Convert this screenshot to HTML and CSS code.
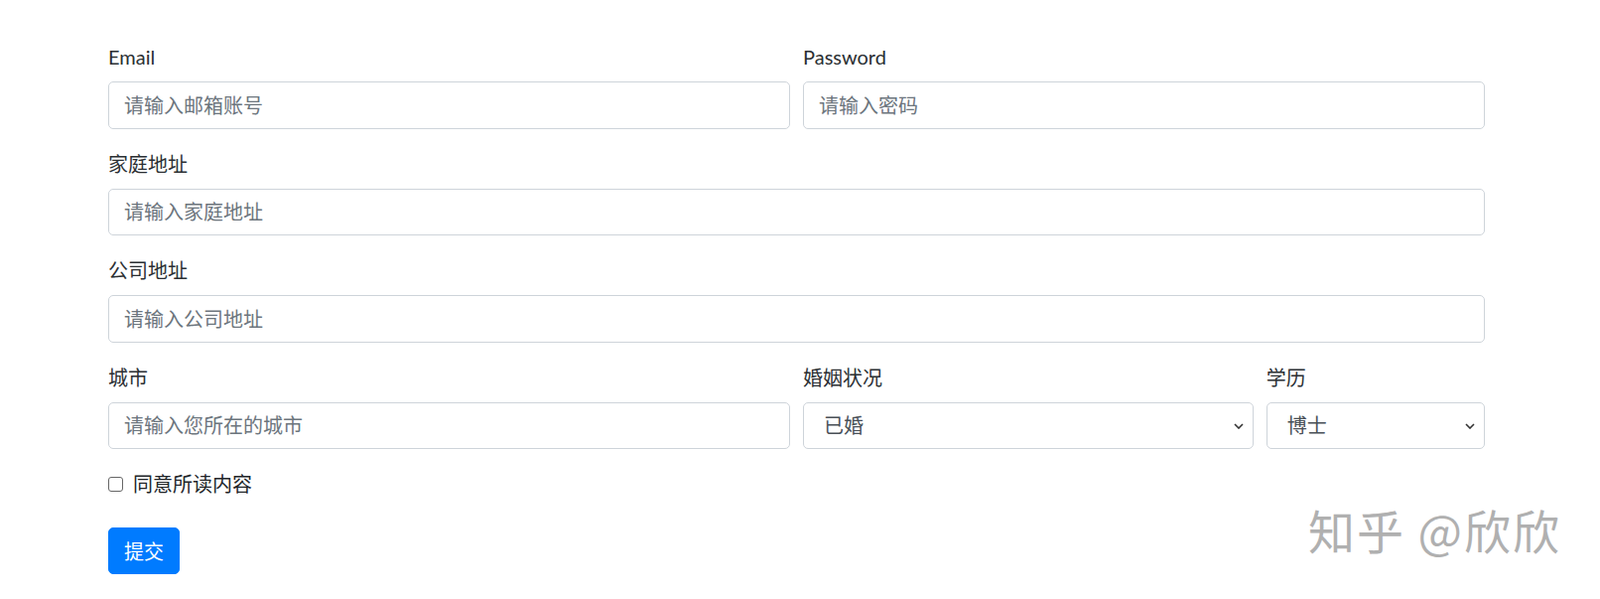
FILE: index.html
```html
<!DOCTYPE html>
<html lang="zh-CN">
<head>
<meta charset="utf-8">
<title>表单</title>
<link rel="stylesheet" href="styles.css">
</head>
<body>
<div class="container">
  <form class="form">
    <div class="row">
      <div class="group col-6">
        <label class="label">Email</label>
        <input class="control" type="email" placeholder="请输入邮箱账号">
      </div>
      <div class="group col-6">
        <label class="label">Password</label>
        <input class="control" type="password" placeholder="请输入密码">
      </div>
    </div>
    <div class="group">
      <label class="label">家庭地址</label>
      <input class="control" type="text" placeholder="请输入家庭地址">
    </div>
    <div class="group">
      <label class="label">公司地址</label>
      <input class="control" type="text" placeholder="请输入公司地址">
    </div>
    <div class="row">
      <div class="group col-6">
        <label class="label">城市</label>
        <input class="control" type="text" placeholder="请输入您所在的城市">
      </div>
      <div class="group col-4">
        <label class="label">婚姻状况</label>
        <div class="select-wrap">
          <select class="control select">
            <option>已婚</option>
            <option>未婚</option>
          </select>
          <svg class="chevron" viewBox="0 0 10 6" width="10" height="6"><path d="M1 1 L5 5 L9 1" fill="none" stroke="#333" stroke-width="1.6"/></svg>
        </div>
      </div>
      <div class="group col-2">
        <label class="label">学历</label>
        <div class="select-wrap">
          <select class="control select">
            <option>博士</option>
            <option>硕士</option>
            <option>本科</option>
          </select>
          <svg class="chevron" viewBox="0 0 10 6" width="10" height="6"><path d="M1 1 L5 5 L9 1" fill="none" stroke="#333" stroke-width="1.6"/></svg>
        </div>
      </div>
    </div>
    <div class="check">
      <input class="check-input" type="checkbox" id="agree">
      <label class="check-label" for="agree">同意所读内容</label>
    </div>
    <button class="btn" type="submit">提交</button>
  </form>
</div>
<div class="watermark">知乎 @欣欣</div>
</body>
</html>
```

FILE: styles.css
```css
* { box-sizing: border-box; }

body {
  margin: 0;
  background: #fff;
  font-family: "Segoe UI", Lato, "Noto Sans CJK SC", sans-serif;
  font-size: 20px;
  line-height: 30px;
  color: #212529;
}

.container {
  width: 1387px;
  margin-left: 109px;
  padding-top: 42px;
}

.row {
  display: flex;
  margin: 0 -6.5px;
}

.col-6, .col-4, .col-2 { padding: 0 6.5px; }
.col-6 { flex: 0 0 50%; }
.col-4 { flex: 0 0 33.3333%; }
.col-2 { flex: 0 0 16.6667%; }

.group { margin-bottom: 20px; }

.label {
  display: block;
  margin-bottom: 10px;
  line-height: 30px;
  color: #2b2f33;
}

.control {
  display: block;
  width: 100%;
  height: 47.5px;
  padding: 7.5px 15px;
  font: inherit;
  font-size: 20px;
  line-height: 30px;
  color: #495057;
  background: #fff;
  border: 1px solid #ced4da;
  border-radius: 5px;
  outline: none;
}

.control::placeholder { color: #6c757d; opacity: 1; }

.select-wrap { position: relative; }

.select {
  appearance: none;
  -webkit-appearance: none;
  padding-left: 20px;
}

.chevron {
  position: absolute;
  right: 10px;
  top: 21px;
  pointer-events: none;
}

.check {
  display: flex;
  align-items: center;
  height: 30px;
  margin-bottom: 29px;
}

.check-input {
  appearance: none;
  -webkit-appearance: none;
  width: 15px;
  height: 15px;
  margin: 0 10px 0 0;
  border: 1px solid #666;
  border-radius: 3px;
  background: #fff;
}

.check-label { line-height: 30px; }

.btn {
  display: block;
  font: inherit;
  font-size: 20px;
  line-height: 30px;
  padding: 7.5px 15px;
  color: #fff;
  background: #007bff;
  border: 1px solid #007bff;
  border-radius: 5px;
}

.watermark {
  position: absolute;
  left: 1318px;
  top: 509px;
  font-family: "Noto Sans CJK SC", sans-serif;
  font-size: 47px;
  line-height: 1;
  letter-spacing: 2px;
  color: #b0b0b0;
  white-space: nowrap;
}
```
